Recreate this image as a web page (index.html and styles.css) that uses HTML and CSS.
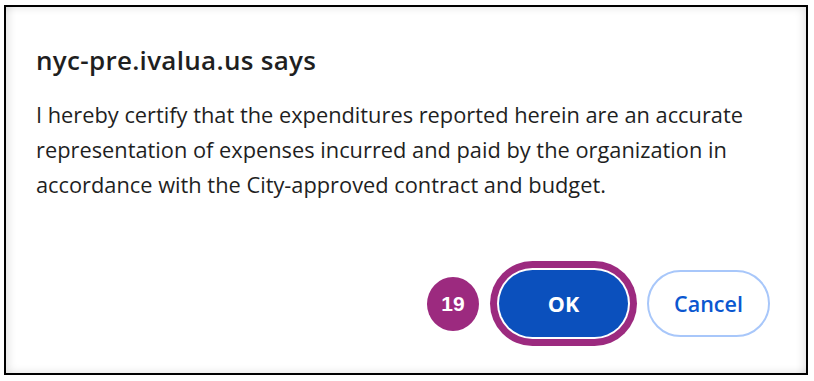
FILE: index.html
```html
<!DOCTYPE html>
<html lang="en">
<head>
<meta charset="utf-8">
<title>Dialog</title>
<link rel="stylesheet" href="styles.css">
</head>
<body>
<div class="frame">
  <h1 class="title">nyc-pre.ivalua.us says</h1>
  <p class="message">I hereby certify that the expenditures reported herein are an accurate representation of expenses incurred and paid by the organization in accordance with the City-approved contract and budget.</p>
  <div class="actions">
    <span class="badge">19</span>
    <button class="btn btn-ok">OK</button>
    <button class="btn btn-cancel">Cancel</button>
  </div>
</div>
</body>
</html>
```
FILE: styles.css
```css
html, body {
  margin: 0;
  padding: 0;
  background: #fff;
}
body {
  width: 814px;
  height: 381px;
  overflow: hidden;
  font-family: "Open Sans", "Noto Sans", sans-serif;
  color: #1f1f1f;
}
.frame {
  box-sizing: border-box;
  width: 804px;
  height: 370px;
  margin: 5px 0 0 4px;
  border: 2px solid #000;
  background: #fff;
  padding: 38px 36px 0 30px;
  display: flex;
  flex-direction: column;
  box-shadow: inset 10px -8px 10px -8px rgba(0,0,0,0.12), inset -10px 8px 10px -8px rgba(0,0,0,0.12);
}
.title {
  margin: 0;
  font-size: 26px;
  font-weight: 600;
  line-height: 30px;
  letter-spacing: 0.3px;
  color: #1f1f1f;
}
.message {
  margin: 22px 0 0 0;
  font-size: 21.8px;
  line-height: 35px;
  color: #1f1f1f;
  width: 730px;
}
.actions {
  margin-top: auto;
  margin-bottom: 36px;
  display: flex;
  justify-content: flex-end;
  align-items: center;
}
.badge {
  width: 52px;
  height: 54px;
  border-radius: 50%;
  background: #9c2a7f;
  color: #fff;
  font-family: "Liberation Sans", Arial, sans-serif;
  font-weight: 700;
  font-size: 21px;
  display: flex;
  align-items: center;
  justify-content: center;
  margin-right: 20px;
}
.btn {
  box-sizing: border-box;
  height: 67px;
  border-radius: 34px;
  font-family: "Open Sans", "Noto Sans", sans-serif;
  font-size: 21.5px;
  font-weight: 600;
  padding: 0;
  cursor: pointer;
}
.btn-ok {
  width: 129px;
  background: #0b50bd;
  color: #fff;
  border: none;
  font-weight: 700;
  box-shadow: 0 0 0 2px #fff, 0 0 0 9px #9c2a7f;
  margin-right: 19px;
}
.btn-cancel {
  width: 123px;
  background: #fff;
  color: #0b57d0;
  border: 2px solid #a8c7fa;
}
```
